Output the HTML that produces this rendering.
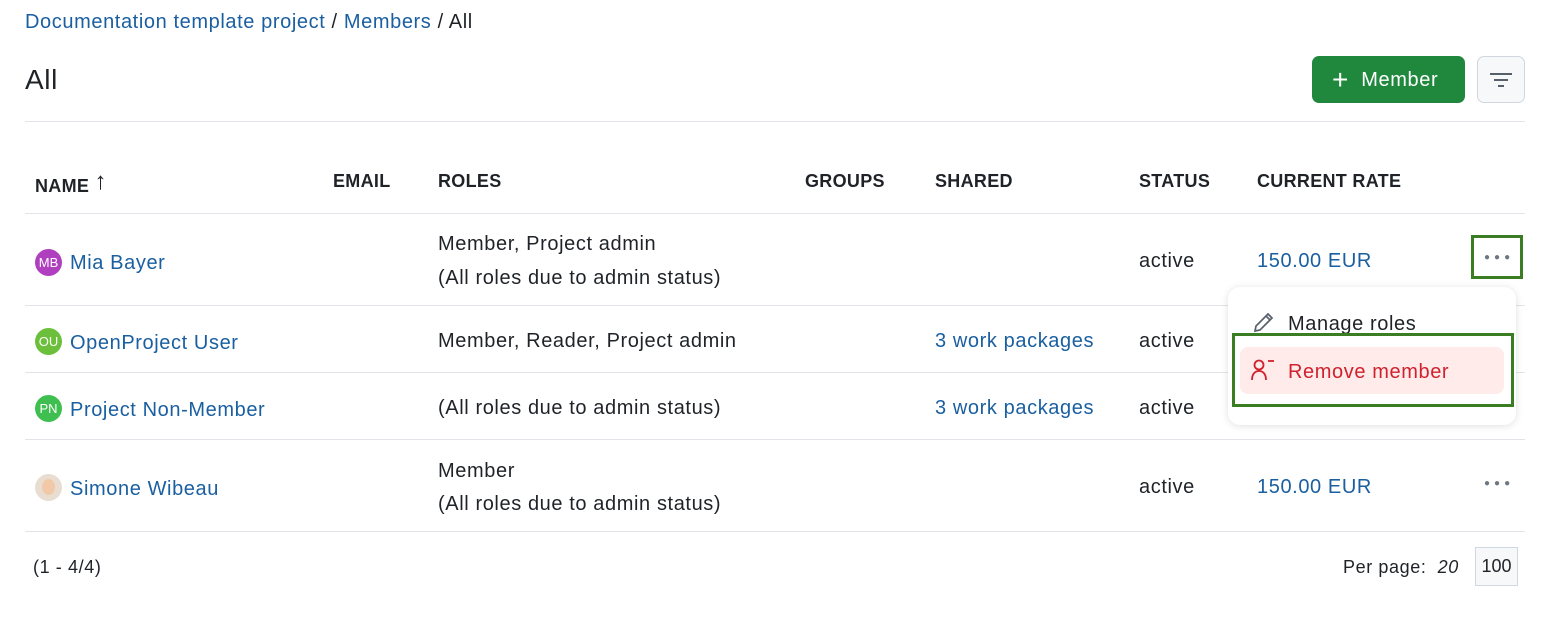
<!DOCTYPE html>
<html><head><meta charset="utf-8"><style>
*{box-sizing:border-box;margin:0;padding:0}
body{width:1545px;height:628px;background:#fff;font-family:"Liberation Sans",sans-serif;color:#1f2328;font-size:20px;letter-spacing:.6px;position:relative;overflow:hidden}
.a{position:absolute;white-space:nowrap}
.l{color:#1a5fa0}
.hr{position:absolute;left:25px;width:1500px;height:1px;background:#e1e4e8}
.th{position:absolute;top:171px;font-weight:bold;font-size:18px;letter-spacing:.3px}
.av{position:absolute;left:35px;width:27px;height:27px;border-radius:50%;color:#fff;font-size:13px;letter-spacing:0;text-align:center;line-height:27px}
.dots{position:absolute;font-size:10px;color:#6e7781;letter-spacing:4px}
</style></head><body>
<div class="a" style="left:25px;top:11px"><span class="l">Documentation template project</span> / <span class="l">Members</span> / All</div>
<div class="a" style="left:25px;top:64px;font-size:28px">All</div>
<div class="a" style="left:1312px;top:56px;width:153px;height:47px;background:#1f883d;border-radius:7px;color:#fff;font-size:20px;line-height:47px;padding-left:20px"><span style="font-size:28px;vertical-align:-3px">+</span>&nbsp;&nbsp;Member</div>
<div class="a" style="left:1477px;top:56px;width:48px;height:47px;background:#f6f8fa;border:1px solid #d0d7de;border-radius:7px">
<svg width="48" height="47" style="position:absolute;left:-1px;top:-1px"><g stroke="#57606a" stroke-width="2"><line x1="13" y1="18" x2="35" y2="18"/><line x1="17" y1="24" x2="31" y2="24"/><line x1="21" y1="30" x2="27" y2="30"/></g></svg></div>
<div class="hr" style="top:121px"></div>
<div class="th" style="left:35px">NAME <span style="font-weight:normal;font-size:24px;position:relative;top:-3px">↑</span></div>
<div class="th" style="left:333px">EMAIL</div>
<div class="th" style="left:438px">ROLES</div>
<div class="th" style="left:805px">GROUPS</div>
<div class="th" style="left:935px">SHARED</div>
<div class="th" style="left:1139px">STATUS</div>
<div class="th" style="left:1257px">CURRENT RATE</div>
<div class="hr" style="top:213px"></div>
<div class="hr" style="top:305px"></div>
<div class="hr" style="top:372px"></div>
<div class="hr" style="top:439px"></div>
<div class="hr" style="top:531px"></div>

<div class="av" style="top:249px;background:#b03fc0">MB</div>
<div class="a l" style="left:70px;top:252px">Mia Bayer</div>
<div class="a" style="left:438px;top:233px">Member, Project admin</div>
<div class="a" style="left:438px;top:267px">(All roles due to admin status)</div>
<div class="a" style="left:1139px;top:250px">active</div>
<div class="a l" style="left:1257px;top:250px">150.00 EUR</div>
<div class="a" style="left:1471px;top:235px;width:52px;height:44px;border:3px solid #3a7d22"></div>
<div class="dots a" style="left:1484px;top:252px">●●●</div>

<div class="av" style="top:328px;background:#6bbf3a">OU</div>
<div class="a l" style="left:70px;top:332px">OpenProject User</div>
<div class="a" style="left:438px;top:330px">Member, Reader, Project admin</div>
<div class="a l" style="left:935px;top:330px">3 work packages</div>
<div class="a" style="left:1139px;top:330px">active</div>

<div class="av" style="top:395px;background:#3fbf4f">PN</div>
<div class="a l" style="left:70px;top:399px">Project Non-Member</div>
<div class="a" style="left:438px;top:397px">(All roles due to admin status)</div>
<div class="a l" style="left:935px;top:397px">3 work packages</div>
<div class="a" style="left:1139px;top:397px">active</div>
<div class="a l" style="left:1257px;top:397px">0.00 EUR</div>

<div class="av" style="top:474px;background:#e8ddd0"><div style="width:13px;height:16px;background:#f1c9a8;border-radius:50%;margin:5px auto"></div></div>
<div class="a l" style="left:70px;top:478px">Simone Wibeau</div>
<div class="a" style="left:438px;top:460px">Member</div>
<div class="a" style="left:438px;top:493px">(All roles due to admin status)</div>
<div class="a" style="left:1139px;top:476px">active</div>
<div class="a l" style="left:1257px;top:476px">150.00 EUR</div>
<div class="dots a" style="left:1484px;top:478px">●●●</div>

<div class="a" style="left:1228px;top:287px;width:288px;height:138px;background:#fff;border-radius:12px;box-shadow:0 1px 8px rgba(0,0,0,.13)"></div>
<svg class="a" style="left:1252px;top:310px" width="24" height="24"><path d="M3 21l1-5L16 4l4 4L8 20z M14 6l4 4" fill="none" stroke="#57606a" stroke-width="1.7"/></svg>
<div class="a" style="left:1288px;top:313px">Manage roles</div>
<div class="a" style="left:1240px;top:347px;width:264px;height:47px;background:#ffebe9;border-radius:8px"></div>
<svg class="a" style="left:1250px;top:358px" width="28" height="24"><g fill="none" stroke="#cf222e" stroke-width="1.8"><circle cx="9" cy="7" r="4.5"/><path d="M2 22c0-6 3-9 7-9s7 3 7 9"/><line x1="18" y1="3" x2="24" y2="3"/></g></svg>
<div class="a" style="left:1288px;top:361px;color:#cf222e">Remove member</div>
<div class="a" style="left:1232px;top:333px;width:282px;height:74px;border:3px solid #3a7d22"></div>

<div class="a" style="left:33px;top:557px;font-size:18px">(1 - 4/4)</div>
<div class="a" style="left:1343px;top:557px;font-size:18px">Per page: &nbsp;<i>20</i></div>
<div class="a" style="left:1475px;top:547px;width:43px;height:39px;border:1px solid #d0d7de;background:#f6f8fa;font-size:18px;letter-spacing:0;line-height:37px;text-align:center">100</div>
</body></html>
